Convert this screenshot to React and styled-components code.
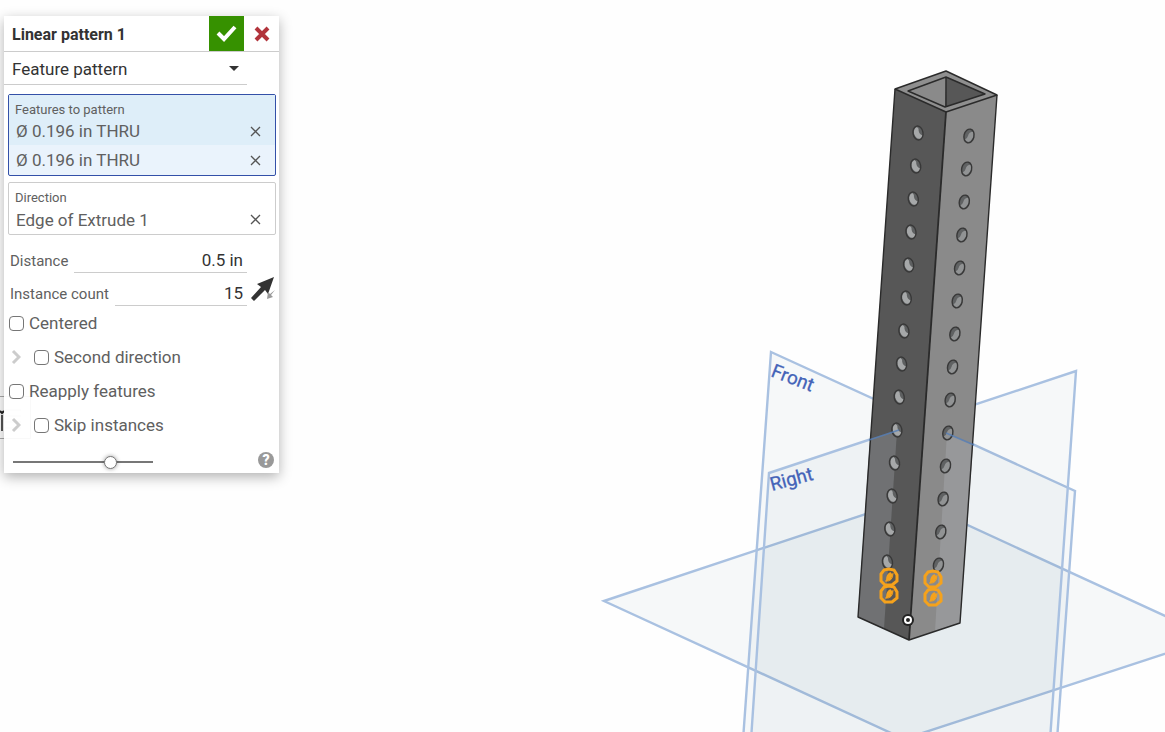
import { useState } from 'react';
import styled, { createGlobalStyle } from 'styled-components';

const GlobalStyle = createGlobalStyle`
  * {
    box-sizing: border-box;
  }
  body {
    margin: 0;
    background-color: #fefefe;
    color: #606060;
    font-family: Roboto, 'Liberation Sans', sans-serif;
    font-size: 17px;
    overflow: hidden;
  }
  button,
  input,
  select {
    margin: 0;
    padding: 0;
    border: 0;
    background: transparent;
    color: inherit;
    font: inherit;
  }
  button {
    cursor: pointer;
  }
`;

const Workspace = styled.main`
  display: grid;
  grid-template: 100vh / 100%;

  > * {
    grid-area: 1 / 1;
  }
`;

const Scene = styled.svg`
  width: 100%;
  height: 100%;
`;

const PlaneLabel = styled.text`
  fill: #4463b8;
  font-family: Roboto, sans-serif;
  font-size: 19px;
`;

const ListToggle = styled.button`
  place-self: start;
  width: 31px;
  height: 43px;
  margin-top: 396px;
  border: 1px solid #aaa;
  border-left: 0;
`;

const Dialog = styled.form`
  place-self: start;
  width: 275px;
  margin: 16px 4px;
  background-color: rgba(255, 255, 255, 0.93);
  box-shadow: 0 4px 12px rgba(0, 0, 0, 0.3);
`;

const Header = styled.header`
  display: flex;
  align-items: center;
  height: 36px;
  padding-left: 8px;
  border-bottom: 1px solid #ccc;
`;

const Title = styled.h1`
  flex: 1;
  margin: 0;
  padding-top: 1px;
  color: #333;
  font-size: 16px;
  font-weight: 700;
`;

const HeaderButton = styled.button`
  display: grid;
  place-items: center;
  width: 35px;
  height: 35px;
  background-color: ${(props) => props.$bg || 'transparent'};
`;

const SelectField = styled.div`
  display: grid;
  align-items: center;
  width: 243px;
  border-bottom: 1px solid #ccc;

  > * {
    grid-area: 1 / 1;
  }
  svg {
    justify-self: end;
    margin-right: 8px;
    pointer-events: none;
  }
`;

const Select = styled.select`
  width: 100%;
  height: 32px;
  padding: 2px 8px 0;
  appearance: none;
  color: #333;
`;

const Picker = styled.section`
  margin: ${(props) => (props.$active ? '9px 3px 6px 4px' : '0 3px 0 4px')};
  border: 1px solid ${(props) => (props.$active ? '#3350a8' : '#ccc')};
  border-radius: 2px;
  background-color: ${(props) => (props.$active ? '#eaf3fc' : 'transparent')};
`;

const PickerLabel = styled.h2`
  margin: 0;
  padding: 7px 6px 0;
  font-size: 13px;
  font-weight: 400;
  line-height: 15px;
  background-color: ${(props) => (props.$active ? '#deeef9' : 'transparent')};
`;

const PickerRow = styled.div`
  display: flex;
  align-items: center;
  justify-content: space-between;
  height: ${(props) => props.$height || 30}px;
  padding: 0 14px 0 7px;
  background-color: ${(props) => (props.$active ? '#deeef9' : 'transparent')};
`;

const RemoveButton = styled.button`
  display: grid;
  place-items: center;
  width: 11px;
  height: 11px;
`;

const Parameters = styled.div`
  display: flex;
  padding: 5px 4px 0 6px;
`;

const ParameterList = styled.div`
  flex: 1;
  min-width: 0;
`;

const ParameterRow = styled.div`
  display: flex;
  align-items: center;
  gap: 6px;
  height: 33px;

  label {
    padding-top: 9px;
    font-size: 15px;
  }
`;

const ParameterInput = styled.input`
  flex: 1;
  min-width: 0;
  height: 33px;
  padding: 8px 4px 0 0;
  border-bottom: 1px solid #ccc;
  color: #333;
  text-align: right;
`;

const FlipButton = styled.button`
  align-self: end;
  width: 28px;
  height: 29px;
`;

const OptionRow = styled.div`
  display: flex;
  align-items: center;
  height: 34px;
  padding-left: 5px;

  label {
    padding-left: 5px;
  }
`;

const ExpandButton = styled.button`
  display: flex;
  align-items: center;
  width: 25px;
  height: 20px;
  padding-left: 2px;
`;

const Checkbox = styled.input`
  width: 15px;
  height: 15px;
  appearance: none;
  border: 1px solid #767676;
  border-radius: 4px;
  background-color: #fff;

  &:checked {
    background-color: #3350a8;
  }
`;

const Footer = styled.footer`
  display: flex;
  align-items: center;
  justify-content: space-between;
  height: 31px;
  padding: 4px 5px 0 9px;
`;

const Slider = styled.input`
  width: 140px;
  height: 16px;
  margin-top: 4px;
  appearance: none;

  &::-webkit-slider-runnable-track {
    height: 2px;
    background-color: #777;
  }
  &::-webkit-slider-thumb {
    width: 13px;
    height: 13px;
    margin-top: -5px;
    appearance: none;
    border: 1px solid #777;
    border-radius: 50%;
    background-color: #fff;
    box-shadow: 0 0 4px rgba(0, 0, 0, 0.4);
  }
`;

const HelpButton = styled.button`
  width: 16px;
  height: 16px;
  border-radius: 50%;
  background-color: #999;
  color: #fff;
  font-size: 14px;
  font-weight: 900;
  line-height: 16px;
`;

const HOLES = Array.from({ length: 14 }, (_, i) => i);

const SEEDS = [
  [889, 577],
  [889, 594],
  [933, 579],
  [933, 597],
];

function Hole({ x, y, side }) {
  const left = side === 'left';
  return (
    <g transform={`translate(${x} ${y}) rotate(${left ? -10 : 14})`}>
      <ellipse rx="5" ry="7" fill={left ? '#5e6061' : '#606263'} />
      {left ? (
        <path d="M0-6Q-4-5-4 0Q-3 6 1 6Q4 6 4 3Q1 2 1-2Q2-4 0-6Z" fill="#a6a8a9" />
      ) : (
        <path d="M3-5Q-1-4-1 0Q-1 3-3 4Q0 8 3 4Q6-1 3-5Z" fill="#919394" />
      )}
      <ellipse rx="5" ry="7" fill="none" stroke="#383838" strokeWidth="1.4" />
    </g>
  );
}

function Seed({ x, y }) {
  return (
    <g transform={`translate(${x} ${y})`} stroke="#f5a21c">
      <path
        d="M-5-7 0-8 5-7 8-2 8 4 3 8-4 8-8 4-8-3Z"
        fill="none"
        strokeWidth="3"
      />
      <path d="M2-4Q-2-2-2 3L1 2 3-3" fill="#f5a21c" strokeWidth="2" />
      <path d="M-4 4Q4 5 4-4" fill="none" strokeWidth="1" />
    </g>
  );
}

function Model() {
  return (
    <Scene
      viewBox="0 0 1165 732"
      preserveAspectRatio="xMaxYMin slice"
      role="img"
      aria-label="Square tube with patterned holes"
    >
      <g fill="#4c7d9c" fillOpacity="0.046" stroke="#a9c1e1" strokeWidth="2.4">
        <path d="M604 601 911 499 1213 638 904 739Z" />
        <path d="M771 352 1075 491 1057 740H743Z" />
        <path d="M769 473 1076 371 1050 740H751Z" />
      </g>
      <g stroke="#4463b8" strokeWidth="0.3">
        <PlaneLabel transform="translate(770 376) rotate(21)">Front</PlaneLabel>
        <PlaneLabel transform="translate(772 491) rotate(-15)">Right</PlaneLabel>
      </g>

      <path d="M895 89 946 112 909 640 858 617Z" fill="#575757" />
      <path d="M946 112 997 95 960 623 909 640Z" fill="#8a8a8a" />
      <path d="M870 439 897 431 884 629 858 617Z" fill="#707173" />
      <path d="M947 433 973 445 960 623 935 631Z" fill="#97989a" />
      <path d="M895 89 946 71 997 95 946 112Z" fill="#8f8f8f" />
      <path d="M908 91 946 77 945 107Z" fill="#8a8a8a" />
      <path d="M946 77 985 94 945 107Z" fill="#575757" />
      <g fill="none" stroke="#2a2a2a" strokeWidth="1.4" strokeLinejoin="round">
        <path d="M895 89 946 71 997 95 946 112Z" />
        <path d="M908 91 946 77 985 94 945 107ZM946 77V106" />
        <path d="M895 89 858 617 909 640 960 623 997 95" />
        <path d="M946 112 909 640" strokeWidth="1.8" />
      </g>
      {HOLES.map((i) => (
        <g key={i}>
          <Hole side="left" x={918 - 2.35 * i} y={133 + 33 * i} />
          <Hole side="right" x={969 - 2.35 * i} y={136 + 33 * i} />
        </g>
      ))}
      <path
        d="M869 440 899 430M946 433 974 445"
        fill="none"
        stroke="#557eb8"
        strokeOpacity="0.8"
        strokeWidth="1.8"
      />
      {SEEDS.map(([x, y]) => (
        <Seed key={`${x}-${y}`} x={x} y={y} />
      ))}
      <circle cx="908" cy="620" r="6" fill="#222" />
      <circle cx="908" cy="620" r="3" fill="#222" stroke="#fff" strokeWidth="2" />
    </Scene>
  );
}

function Item({ name, active, height }) {
  return (
    <PickerRow $active={active} $height={height}>
      <span>{name}</span>
      <RemoveButton type="button" aria-label={`Remove ${name}`}>
        <svg width="11" height="11" viewBox="0 0 11 11">
          <path d="M1 1 10 10M10 1 1 10" stroke="#555" strokeWidth="1.3" />
        </svg>
      </RemoveButton>
    </PickerRow>
  );
}

function Option({ id, label, expandable }) {
  return (
    <OptionRow>
      {expandable && (
        <ExpandButton type="button" aria-label={`Expand ${label}`}>
          <svg width="10" height="16" viewBox="0 0 10 16">
            <path d="M2 2 8 8 2 14" fill="none" stroke="#ccc" strokeWidth="3" />
          </svg>
        </ExpandButton>
      )}
      <Checkbox type="checkbox" id={id} />
      <label htmlFor={id}>{label}</label>
    </OptionRow>
  );
}

function App() {
  const [distance, setDistance] = useState('0.5 in');
  const [count, setCount] = useState('15');

  return (
    <>
      <GlobalStyle />
      <Workspace>
        <Model />
        <ListToggle type="button" aria-label="Toggle list">
          <svg width="30" height="41" viewBox="0 0 30 41">
            <path d="M0 14 2 16 4 14" fill="none" stroke="#222" strokeWidth="2" />
            <path d="M2 18V34" stroke="#555" strokeWidth="2" />
            <path d="M5 13H21M5 19H21M5 25H21M5 31H21" stroke="#bbb" />
          </svg>
        </ListToggle>
        <Dialog onSubmit={(e) => e.preventDefault()}>
          <Header>
            <Title>Linear pattern 1</Title>
            <HeaderButton type="submit" $bg="#369100" aria-label="Accept">
              <svg width="21" height="17" viewBox="0 0 21 17">
                <path d="M2 8 8 14 19 2" fill="none" stroke="#fff" strokeWidth="4" />
              </svg>
            </HeaderButton>
            <HeaderButton type="button" aria-label="Cancel">
              <svg width="16" height="16" viewBox="0 0 16 16">
                <path d="M2 2 14 14M14 2 2 14" stroke="#b2343c" strokeWidth="4" />
              </svg>
            </HeaderButton>
          </Header>

          <SelectField>
            <Select aria-label="Pattern type" defaultValue="feature">
              <option value="part">Part pattern</option>
              <option value="feature">Feature pattern</option>
              <option value="face">Face pattern</option>
            </Select>
            <svg width="10" height="5" viewBox="0 0 10 5">
              <path d="M0 0H10L5 5Z" fill="#333" />
            </svg>
          </SelectField>

          <Picker $active>
            <PickerLabel $active>Features to pattern</PickerLabel>
            <Item name="Ø 0.196 in THRU" active height={28} />
            <Item name="Ø 0.196 in THRU" />
          </Picker>
          <Picker>
            <PickerLabel>Direction</PickerLabel>
            <Item name="Edge of Extrude 1" height={29} />
          </Picker>

          <Parameters>
            <ParameterList>
              <ParameterRow>
                <label htmlFor="distance">Distance</label>
                <ParameterInput
                  id="distance"
                  value={distance}
                  onChange={(e) => setDistance(e.target.value)}
                />
              </ParameterRow>
              <ParameterRow>
                <label htmlFor="count">Instance count</label>
                <ParameterInput
                  id="count"
                  value={count}
                  onChange={(e) => setCount(e.target.value)}
                />
              </ParameterRow>
            </ParameterList>
            <FlipButton type="button" aria-label="Opposite direction">
              <svg width="28" height="29" viewBox="0 0 28 29">
                <path d="M27 0 21 17 18 13 7 24 4 21 14 10 10 7Z" fill="#333" />
                <path d="M28 13 23 17 21 15 20 22 26 20 24 18Z" fill="#999" />
              </svg>
            </FlipButton>
          </Parameters>

          <Option id="centered" label="Centered" />
          <Option id="second" label="Second direction" expandable />
          <Option id="reapply" label="Reapply features" />
          <Option id="skip" label="Skip instances" expandable />

          <Footer>
            <Slider type="range" min="0" max="100" defaultValue="72" aria-label="Preview opacity" />
            <HelpButton type="button" aria-label="Help">
              ?
            </HelpButton>
          </Footer>
        </Dialog>
      </Workspace>
    </>
  );
}

export default App;
